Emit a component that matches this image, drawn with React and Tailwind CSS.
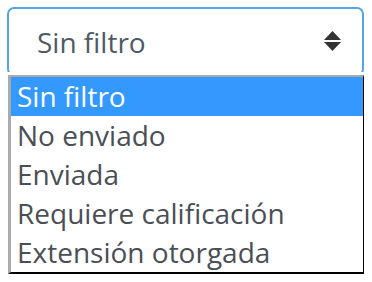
export default function App() {
  const opts = ["Sin filtro", "No enviado", "Enviada", "Requiere calificación", "Extensión otorgada"];
  return (
    <div className="relative w-[372px] h-[282px] bg-white" style={{ fontFamily: '"Open Sans", sans-serif' }}>
      <div className="pt-[7px] pl-[7px]">
        <div className="w-[357px] h-[69px] border-2 border-[#52a5e6] rounded-[7px] flex items-start">
          <span className="ml-[28px] mt-[14px] text-[28px] leading-[38px] text-[#4f5a64]">Sin filtro</span>
          <svg className="ml-auto mr-[21px] mt-[22px]" width="17" height="20" viewBox="0 0 17 20">
            <path d="M8.5 0 L17 9 L0 9 Z" fill="#333" />
            <path d="M0 11 L17 11 L8.5 20 Z" fill="#333" />
          </svg>
        </div>
      </div>
      <div className="absolute left-[8px] top-[72px] w-[356px] bg-white pt-[3px]">
        <div className="border-l-[3px] border-t-2 border-r border-b-2 border-l-[#aaaaaa] border-t-[#aaaaaa] border-r-black border-b-black">
          {opts.map((o, i) => (
            <div
              key={o}
              className={
                "h-[39px] pl-[6px] text-[28px] leading-[39px] whitespace-nowrap " +
                (i === 0 ? "bg-[#3399ff] text-white" : "text-[#4a4f55]")
              }
            >
              {o}
            </div>
          ))}
        </div>
      </div>
    </div>
  );
}
